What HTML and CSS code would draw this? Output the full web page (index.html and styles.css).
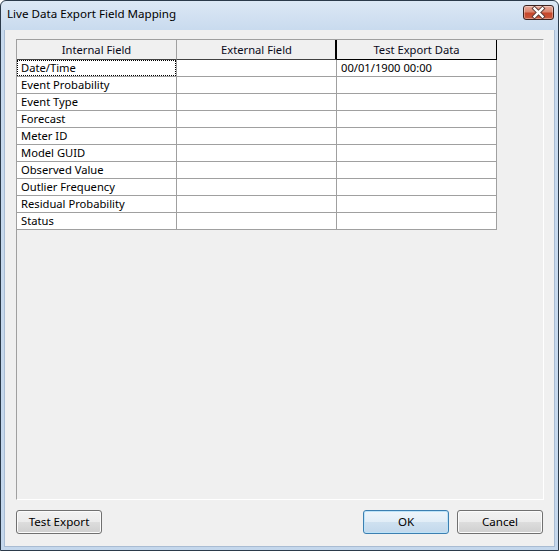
FILE: index.html
```html
<!DOCTYPE html>
<html>
<head>
<meta charset="utf-8">
<title>Live Data Export Field Mapping</title>
<link rel="stylesheet" href="styles.css">
</head>
<body>
<div class="window">
  <div class="titlebar">
    <span class="title">Live Data Export Field Mapping</span>
    <div class="close">
      <svg width="29" height="13" viewBox="0 0 29 13">
        <path d="M10.5 2.5 L18.5 10.5 M18.5 2.5 L10.5 10.5" stroke="#5a3a36" stroke-width="4.2" stroke-linecap="square" fill="none"/>
        <path d="M10.5 2.5 L18.5 10.5 M18.5 2.5 L10.5 10.5" stroke="#ffffff" stroke-width="2.4" stroke-linecap="square" fill="none"/>
      </svg>
    </div>
  </div>
  <div class="client">
    <div class="panel">
      <div class="grid">
        <div class="hcell">Internal Field</div>
        <div class="hcell h2">External Field</div>
        <div class="hcell h3">Test Export Data</div>

        <div class="cell focus">Date/Time</div><div class="cell"></div><div class="cell">00/01/1900 00:00</div>
        <div class="cell">Event Probability</div><div class="cell"></div><div class="cell"></div>
        <div class="cell">Event Type</div><div class="cell"></div><div class="cell"></div>
        <div class="cell">Forecast</div><div class="cell"></div><div class="cell"></div>
        <div class="cell">Meter ID</div><div class="cell"></div><div class="cell"></div>
        <div class="cell">Model GUID</div><div class="cell"></div><div class="cell"></div>
        <div class="cell">Observed Value</div><div class="cell"></div><div class="cell"></div>
        <div class="cell">Outlier Frequency</div><div class="cell"></div><div class="cell"></div>
        <div class="cell">Residual Probability</div><div class="cell"></div><div class="cell"></div>
        <div class="cell">Status</div><div class="cell"></div><div class="cell"></div>
      </div>
    </div>
    <div class="buttons">
      <button class="btn">Test Export</button>
      <span class="spacer"></span>
      <button class="btn default">OK</button>
      <button class="btn">Cancel</button>
    </div>
  </div>
</div>
</body>
</html>
```
FILE: styles.css
```css
* { box-sizing: border-box; }
html, body { margin: 0; padding: 0; background: #ffffff; }
body {
  font-family: "Segoe UI", "Noto Sans", "Open Sans", sans-serif;
  font-size: 11.2px;
  color: #000;
}
.window {
  width: 559px;
  height: 551px;
  border: 1px solid #2b3a4a;
  border-radius: 6px 6px 0 0;
  background: linear-gradient(to bottom, #dce8f5 0, #c8daee 30px, #c4d7ec 100%);
  padding: 0 3px 3px 3px;
  display: flex;
  flex-direction: column;
}
.titlebar {
  height: 29px;
  display: flex;
  align-items: flex-start;
  padding: 4px 1px 0 3px;
}
.title {
  font-size: 11.6px;
  line-height: 16px;
  padding-top: 1px;
  color: #000;
}
.close {
  margin-left: auto;
  width: 31px;
  height: 15px;
  border: 1px solid #3b2320;
  border-radius: 3px;
  background: linear-gradient(to bottom, #e8a99a 0, #d98670 45%, #c7462b 55%, #c95a3f 100%);
  box-shadow: inset 0 0 0 1px rgba(255,255,255,0.35);
  display: flex;
  align-items: center;
  justify-content: center;
}
.close svg { display: block; }
.client {
  flex: 1;
  background: #f0f0f0;
  display: flex;
  flex-direction: column;
  border: 1px solid #a9bcd3;
  border-top: none;
  padding: 9px 10px 12px 11px;
}
.panel {
  flex: 1;
  border-top: 1px solid #a0a0a0;
  border-left: 1px solid #a0a0a0;
  border-right: 1px solid #ffffff;
  border-bottom: 1px solid #ffffff;
  background: #f0f0f0;
}
.grid {
  display: grid;
  grid-template-columns: 160px 160px 160px;
}
.hcell {
  height: 20px;
  line-height: 19.5px;
  text-align: center;
  border-right: 1px solid #a0a0a0;
  border-bottom: 1px solid #404040;
  background: #f0f0f0;
  color: #0a0a1a;
}
.hcell.h2 {
  border-right: 1px solid #000;
  box-shadow: inset -1px 0 0 #000;
}
.hcell.h3 {
  border-right: 1px solid #000;
  border-bottom: 1px solid #000;
}
.cell {
  height: 17px;
  line-height: 16.5px;
  padding-left: 4px;
  background: #ffffff;
  border-right: 1px solid #a0a0a0;
  border-bottom: 1px solid #a0a0a0;
  white-space: nowrap;
  overflow: hidden;
  position: relative;
}
.cell.focus::after {
  content: "";
  position: absolute;
  left: 0;
  top: 0;
  right: 0;
  bottom: 0;
  border: 1px dotted #000;
}
.buttons {
  display: flex;
  gap: 8px;
  margin-top: 10px;
  padding-right: 1px;
}
.spacer { flex: 1; }
.btn {
  width: 86px;
  height: 24px;
  margin: 0;
  padding: 0 0 1px 0;
  font-family: inherit;
  font-size: 11.6px;
  color: #000;
  border: 1px solid #707070;
  border-radius: 3px;
  background: linear-gradient(to bottom, #f2f2f2 0, #ebebeb 50%, #dddddd 50%, #cfcfcf 100%);
  box-shadow: inset 0 0 0 1px #fbfbfb;
}
.btn.default {
  border-color: #3c7fb1;
  background: linear-gradient(to bottom, #eef5fb 0, #e1edf7 50%, #cfe1f0 50%, #c2d8ec 100%);
  box-shadow: inset 0 0 0 1px #bde3f8;
}
```
